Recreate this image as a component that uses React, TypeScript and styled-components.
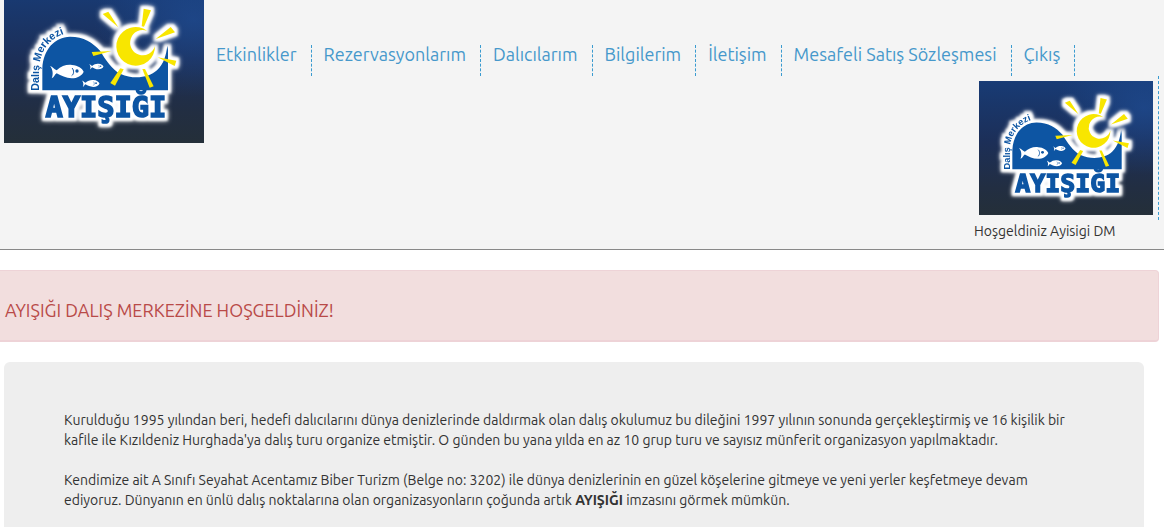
import React, { useId } from "react";
import styled, { createGlobalStyle } from "styled-components";

const bodyFont = `Ubuntu, "DejaVu Sans Condensed", "DejaVu Sans", sans-serif`;
const displayFont = `Ubuntu, "Open Sans", "Noto Sans", sans-serif`;

const GlobalStyle = createGlobalStyle`
  *, *::before, *::after { box-sizing: border-box; }
  body {
    margin: 0;
    background: #fff;
    color: #333;
    font-family: ${bodyFont};
    font-size: 14px;
    line-height: 20px;
  }
`;

const Header = styled.header`
  background: #f4f4f4;
  border-bottom: 1px solid #888;
  padding: 0 5px 8px 4px;
`;

const TopBar = styled.div`
  display: flex;
  align-items: flex-start;
  height: 76px;
`;

const BrandLink = styled.a`
  display: block;
  flex: none;
  line-height: 0;
`;

const NavList = styled.ul`
  display: flex;
  margin: 45px 0 0;
  padding: 0;
  list-style: none;
`;

const NavItem = styled.li`
  height: 31px;
  padding: 0 14px 0 12px;
  border-right: 1px dashed #3a9bd0;
  font-family: ${displayFont};
  font-size: 18px;
  line-height: 18px;
`;

const NavLink = styled.a`
  color: #4698cb;
  text-decoration: none;
  white-space: nowrap;
`;

const Account = styled.div`
  width: fit-content;
  margin-left: auto;
`;

const Avatar = styled.a`
  display: block;
  padding: 5px;
  border-right: 1px dashed #3a9bd0;
  line-height: 0;
`;

const Greeting = styled.p`
  margin: 1px 0 0;
`;

const Alert = styled.section`
  margin: 20px 5px 20px 0;
  padding: 29px 5px 20px;
  background: #f2dede;
  border: 1px solid #eed3d7;
  border-left: 0;
  border-bottom-width: 2px;
  border-radius: 0 4px 4px 0;
`;

const AlertTitle = styled.h1`
  margin: 0;
  font-family: ${displayFont};
  font-size: 18px;
  font-weight: 400;
  line-height: 20px;
  color: #b94a48;
`;

const Intro = styled.section`
  margin: 0 20px 0 4px;
  padding: 48px 60px 17px;
  background: #eee;
  border-radius: 6px 6px 0 0;
`;

const Paragraph = styled.p`
  margin: 0 0 20px;
  &:last-child { margin-bottom: 0; }
`;

const rays = [
  "308,42 325,35 355,82",
  "431,26 453,31 432,80 425,79",
  "512,81 525,97 467,117",
  "473,172 529,182 524,198",
  "275,156 280,168 334,153",
  "331,249 345,257 371,208 361,205",
  "427,207 435,207 461,259 449,263",
];

function Fish({ x, y, scale }: { x: number; y: number; scale: number }) {
  return (
    <g transform={`translate(${x} ${y}) scale(${scale})`}>
      <path
        fill="#fff"
        d="M0 -18 C8 -16 12 -9 20 -5 C34 -18 50 -23 66 -21 C84 -20 97 -11 101 -1 C96 11 82 19 65 19 C48 19 33 11 20 4 C14 7 13 16 5 19 C10 8 9 -8 0 -18Z"
      />
      <circle cx="81" cy="-3" r="5" fill="#0d55a3" />
      <path d="M66 -12 C73 -5 72 7 65 11" fill="none" stroke="#0d55a3" strokeWidth="3" />
    </g>
  );
}

function Logo({ width, height, top = 0 }: { width: number; height: number; top?: number }) {
  const id = useId().replace(/[^a-zA-Z0-9]/g, "");
  return (
    <svg
      width={width}
      height={height}
      viewBox={`0 ${top} 600 ${462 - top}`}
      role="img"
      aria-label="Ayışığı Dalış Merkezi"
    >
      <defs>
        <linearGradient id={`${id}sea`} x1="0" y1="0" x2="0" y2="1">
          <stop offset="0" stopColor="#183b75" />
          <stop offset="0.45" stopColor="#1c2f58" />
          <stop offset="0.8" stopColor="#222e42" />
          <stop offset="1" stopColor="#242f39" />
        </linearGradient>
        <radialGradient id={`${id}light`} cx="0.95" cy="0.2" r="0.5">
          <stop offset="0" stopColor="#1f4c93" stopOpacity="0.7" />
          <stop offset="1" stopColor="#1f4c93" stopOpacity="0" />
        </radialGradient>
        <filter id={`${id}halo`} x="-20%" y="-20%" width="140%" height="140%" colorInterpolationFilters="sRGB">
          <feMorphology in="SourceAlpha" operator="dilate" radius="9" result="wide" />
          <feGaussianBlur in="wide" stdDeviation="3" result="edge" />
          <feGaussianBlur in="wide" stdDeviation="8" result="soft" />
          <feFlood floodColor="#fff" result="white" />
          <feComposite in="white" in2="edge" operator="in" result="solid" />
          <feComposite in="white" in2="soft" operator="in" result="glow" />
          <feMerge>
            <feMergeNode in="glow" />
            <feMergeNode in="solid" />
            <feMergeNode in="SourceGraphic" />
          </feMerge>
        </filter>
        <path id={`${id}arc`} d="M118 272 V205 C120 150 152 106 216 96" />
      </defs>
      <rect width="600" height="462" fill={`url(#${id}sea)`} />
      <rect width="600" height="462" fill={`url(#${id}light)`} />
      <g transform="translate(-12 33)">
        <g filter={`url(#${id}halo)`}>
          <path
            fill="#0d55a3"
            d="M127 271 V205 C130 148 164 111 210 110 C252 110 278 128 300 152 C316 178 336 209 362 222 C400 239 446 234 471 211 C492 191 498 166 502 137 L504 150 V271Z"
          />
          <path fill="#f8e600" d="M441 92 A58 58 0 1 0 465 138 A38 38 0 1 1 441 92Z" />
          {rays.map((points) => (
            <polygon key={points} points={points} fill="#f8e600" />
          ))}
          <text
            fontFamily='"Liberation Sans", Arial, sans-serif'
            fontSize="32"
            fontWeight="700"
            fill="#0d55a3"
          >
            <textPath href={`#${id}arc`}>Dalış Merkezi</textPath>
          </text>
          <text
            x="318"
            y="350"
            textAnchor="middle"
            fontFamily='"DejaVu Sans Mono", monospace'
            fontSize="86"
            fontWeight="700"
            fill="#0d55a3"
            stroke="#0d55a3"
            strokeWidth="5"
          >
            AYIŞIĞI
          </text>
        </g>
        <Fish x={150} y={216} scale={1} />
        <Fish x={268} y={200} scale={0.42} />
        <Fish x={246} y={251} scale={0.52} />
      </g>
    </svg>
  );
}

const links = [
  "Etkinlikler",
  "Rezervasyonlarım",
  "Dalıcılarım",
  "Bilgilerim",
  "İletişim",
  "Mesafeli Satış Sözleşmesi",
  "Çıkış",
];

export default function App() {
  return (
    <>
      <GlobalStyle />
      <Header>
        <TopBar>
          <BrandLink href="#">
            <Logo width={200} height={143} top={33} />
          </BrandLink>
          <nav>
            <NavList>
              {links.map((label) => (
                <NavItem key={label}>
                  <NavLink href="#">{label}</NavLink>
                </NavItem>
              ))}
            </NavList>
          </nav>
        </TopBar>
        <Account>
          <Avatar href="#">
            <Logo width={174} height={134} />
          </Avatar>
          <Greeting>Hoşgeldiniz Ayisigi DM</Greeting>
        </Account>
      </Header>
      <main>
        <Alert>
          <AlertTitle>AYIŞIĞI DALIŞ MERKEZİNE HOŞGELDİNİZ!</AlertTitle>
        </Alert>
        <Intro>
          <Paragraph>
            Kurulduğu 1995 yılından beri, hedefi dalıcılarını dünya denizlerinde daldırmak olan dalış okulumuz bu
            dileğini 1997 yılının sonunda gerçekleştirmiş ve 16 kişilik bir kafile ile Kızıldeniz Hurghada'ya dalış
            turu organize etmiştir. O günden bu yana yılda en az 10 grup turu ve sayısız münferit organizasyon
            yapılmaktadır.
          </Paragraph>
          <Paragraph>
            Kendimize ait A Sınıfı Seyahat Acentamız Biber Turizm (Belge no: 3202) ile dünya denizlerinin en güzel
            köşelerine gitmeye ve yeni yerler keşfetmeye devam ediyoruz. Dünyanın en ünlü dalış noktalarına olan
            organizasyonların çoğunda artık <strong>AYIŞIĞI</strong> imzasını görmek mümkün.
          </Paragraph>
        </Intro>
      </main>
    </>
  );
}
